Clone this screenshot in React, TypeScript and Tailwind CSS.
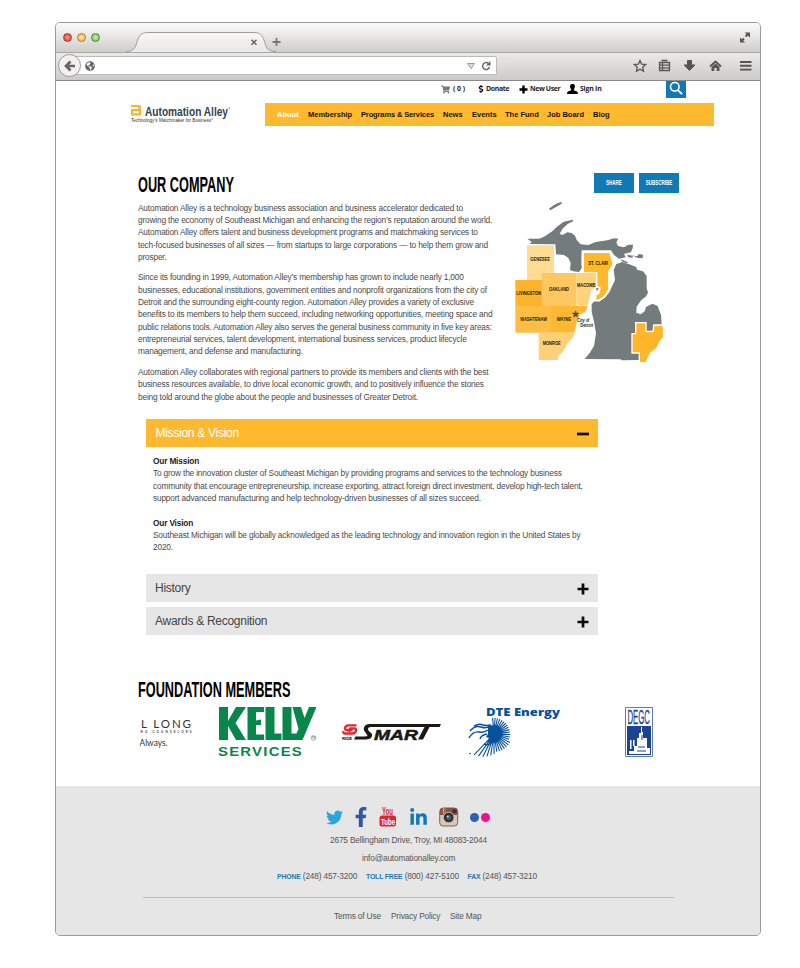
import React from "react";
import { FaTwitter, FaFacebookF, FaLinkedinIn, FaShoppingCart, FaDollarSign, FaGlobeAmericas } from "react-icons/fa";

const company = [
  [
    "Automation Alley is a technology business association and business accelerator dedicated to",
    "growing the economy of Southeast Michigan and enhancing the region’s reputation around the world.",
    "Automation Alley offers talent and business development programs and matchmaking services to",
    "tech-focused businesses of all sizes — from startups to large corporations — to help them grow and",
    "prosper.",
  ],
  [
    "Since its founding in 1999, Automation Alley’s membership has grown to include nearly 1,000",
    "businesses, educational institutions, government entities and nonprofit organizations from the city of",
    "Detroit and the surrounding eight-county region. Automation Alley provides a variety of exclusive",
    "benefits to its members to help them succeed, including networking opportunities, meeting space and",
    "public relations tools. Automation Alley also serves the general business community in five key areas:",
    "entrepreneurial services, talent development, international business services, product lifecycle",
    "management, and defense and manufacturing.",
  ],
  [
    "Automation Alley collaborates with regional partners to provide its members and clients with the best",
    "business resources available, to drive local economic growth, and to positively influence the stories",
    "being told around the globe about the people and businesses of Greater Detroit.",
  ],
];

function Lines({ lines }: { lines: string[] }) {
  return (
    <p>
      {lines.map((l) => (
        <span key={l} className="block whitespace-nowrap">{l}</span>
      ))}
    </p>
  );
}

function TitleBar() {
  return (
    <div className="flex h-[29px] shrink-0 bg-linear-to-b from-[#fafafa] via-[#e6e5e3] to-[#cfcdca]">
      <div className="flex w-[70px] items-center gap-[5px] pl-[7px]">
        <i className="size-[9px] rounded-full border border-[#9b3a38] bg-radial from-[#ff8d88] to-[#d9302f]" />
        <i className="size-[9px] rounded-full border border-[#ae7b33] bg-radial from-[#ffe9a4] to-[#f0ab3c]" />
        <i className="size-[9px] rounded-full border border-[#50803f] bg-radial from-[#c8f2a8] to-[#6abd51]" />
      </div>
      <svg className="h-[29px] w-[634px]" viewBox="126 23 634 29">
        <defs>
          <linearGradient id="tab" x1="0" y1="0" x2="0" y2="1">
            <stop offset="0" stopColor="#f7f7f6" />
            <stop offset="1" stopColor="#e9e8e6" />
          </linearGradient>
        </defs>
        <path d="M126 52C136 52 136 44 138 39C140 34 143 32.5 149 32.5H254C260 32.5 262 35 264 40C266 46 266 52 276 52Z" fill="url(#tab)" />
        <path d="M126 51.5C136 51.5 136 44 138 39C140 34 143 32.5 149 32.5H254C260 32.5 262 35 264 40C266 46 266 51.5 276 51.5" fill="none" stroke="#a19f9d" />
        <path d="M251.5 39.8l5 5m0-5l-5 5" stroke="#666" strokeWidth="1.5" />
        <path d="M276.500 38v8M272.500 42h8" stroke="#777" strokeWidth="1.8" />
        <g fill="#555" stroke="#555">
          <path d="M741 41.500l3-3M745.500 36.500l3-3" strokeWidth="1.800" />
          <path d="M740 37.500v5h5zM744.700 32.500h5.300v5.300z" stroke="none" />
        </g>
      </svg>
    </div>
  );
}

function ToolBar() {
  return (
    <div className="flex h-[29px] shrink-0 items-center border-t border-b border-t-[#aaa8a5] border-b-[#8b8a88] bg-linear-to-b from-[#eceae8] to-[#cdcbc8] pb-[2px]">
      <div className="z-10 ml-[2px] flex size-[23px] items-center justify-center rounded-full border border-[#999] bg-[#f2f1f0]">
        <svg className="h-[12px] w-[12px]" viewBox="0 0 12 12">
          <path d="M11 6H3M6.500 1.500L2 6l4.500 4.500" fill="none" stroke="#666" strokeWidth="2.700" />
        </svg>
      </div>
      <div className="-ml-[6px] flex h-[19px] w-[422px] items-center rounded-r-[2px] border border-[#bdbbb8] bg-white pl-[9px] text-[#666]">
        <FaGlobeAmericas className="size-[10px]" />
        <svg className="mr-[4px] ml-auto h-[12px] w-[26px]" viewBox="0 0 26 12">
          <path d="M1.500 3.500h7L5 8.500z" fill="#ddd" stroke="#999" />
          <path d="M22.500 3.500A3.500 3.500 0 1 0 23.500 7" fill="none" stroke="#666" strokeWidth="1.400" />
          <path d="M24.500 1v4.500H20z" fill="#666" />
        </svg>
      </div>
      <svg className="ml-[135.500px] h-[14px] w-[120px]" viewBox="632 59 120 14" fill="none" stroke="#555">
        <path d="M639 60.500l1.700 3.700 4 .4-3 2.700.9 4-3.600-2.100-3.600 2.100.9-4-3-2.700 4-.4z" strokeWidth="1.300" />
        <path d="M658.500 62.500h10v8h-10zM660.500 60.500h6M661.500 62.500v8M658.500 65.200h10M658.500 67.800h10" strokeWidth="1.300" />
        <path d="M686.500 60.500h4v4.500h3.500l-5.500 5.500-5.500-5.500h3.500z" fill="#555" strokeLinejoin="round" />
        <path d="M709 66.500l5.500-5 5.500 5" strokeWidth="1.800" />
        <path d="M710.500 67l4-3.500 4 3.500v4h-2.800v-3h-2.400v3h-2.800z" fill="#555" stroke="none" />
        <path d="M739 62h11.500M739 65.800h11.500M739 69.600h11.500" strokeWidth="1.900" />
      </svg>
    </div>
  );
}

function Header() {
  return (
    <header className="h-[46px] shrink-0">
      <div className="flex h-[22px] text-[6.900px] font-bold text-[#222]">
        <div className="ml-[385px] flex h-[17px] w-[189px] items-center font-['Open_Sans','Liberation_Sans',sans-serif] whitespace-nowrap">
          <span className="flex w-[36px] items-center gap-[3px]"><FaShoppingCart className="size-[9px] text-[#777]" />( 0 )</span>
          <span className="flex w-[42px] items-center gap-[1px]"><FaDollarSign className="size-[8px] text-black" /><span className="tracking-[-0.32px]">Donate</span></span>
          <span className="flex w-[48px] items-center gap-[2px]">
            <svg className="size-[9px] shrink-0" viewBox="0 0 9 9"><path d="M4.500.5v8M.5 4.500h8" stroke="#000" strokeWidth="2.400" /></svg><span className="tracking-[-0.38px]">New User</span>
          </span>
          <span className="flex items-center gap-[2px]">
            <svg className="h-[10px] w-[11px]" viewBox="0 0 11 10"><path d="M5.500 0C8 0 8.200 2 7.700 3.800 7.300 5.200 6.800 5.500 6.800 6.300L10 7.500q1 .5 1 2.500H0Q0 8 1 7.500L4.200 6.300C4.200 5.500 3.700 5.200 3.300 3.800 2.800 2 3 0 5.500 0z" /></svg>
            <span className="tracking-[-0.2px]">Sign In</span>
          </span>
        </div>
        <div className="ml-[36px] flex h-[17px] w-[20px] items-start justify-center bg-[#0f7ab6]">
          <svg className="h-[15px] w-[14px]" viewBox="0 0 14 15"><circle cx="5.800" cy="5.800" r="4.300" fill="none" stroke="#fff" strokeWidth="1.600" /><path d="M9 9.200l4 4" stroke="#fff" strokeWidth="1.900" /></svg>
        </div>
      </div>
      <div className="flex h-[23px]">
        <svg className="ml-[74px] h-[23px] w-[106px]" viewBox="130 103 106 23">
          <path d="M131 105h8q2 0 2 2v8.500h-10v-6.500h7.500v-2H131z" fill="#fbb12a" />
          <path d="M133 111.300h6v2h-6z" fill="#fff" />
          <text x="145" y="115.500" fontFamily="Liberation Sans" fontWeight="bold" fontSize="12" textLength="83" lengthAdjust="spacingAndGlyphs" fill="#33444a">Automation Alley</text>
          <circle cx="229.300" cy="108" r=".8" fill="#66757a" />
          <text x="131" y="122" fontFamily="Liberation Sans" fontSize="5.500" textLength="82" lengthAdjust="spacingAndGlyphs" fill="#333">Technology’s Matchmaker for Business°</text>
        </svg>
        <nav className="ml-[29px] flex h-[23px] w-[449px] items-center bg-[#ffb92f] text-[7.500px] font-bold whitespace-nowrap text-[#1a1200]">
          <a className="ml-[12px] w-[31px] text-white">About</a>
          <a className="w-[53px]">Membership</a>
          <a className="w-[82px] tracking-[-0.13px]">Programs &amp; Services</a>
          <a className="w-[29px]">News</a>
          <a className="w-[33px]">Events</a>
          <a className="w-[42px]">The Fund</a>
          <a className="w-[46px]">Job Board</a>
          <a>Blog</a>
        </nav>
      </div>
    </header>
  );
}

const counties: [number, number, number, string][] = [
  [94, 303, 59, "GENESEE"],
  [268, 316, 59, "ST. CLAIR"],
  [150, 393, 60, "OAKLAND"],
  [234, 380, 55, "MACOMB"],
  [52, 405, 74, "LIVINGSTON"],
  [64, 482, 80, "WASHTENAW"],
  [173, 482, 44, "WAYNE"],
  [131, 555, 54, "MONROE"],
  [235, 485, 36, "City of"],
  [244, 502, 38, "Detroit"],
];

function CountyMap() {
  return (
    <svg className="mt-[7px] h-[162px] w-[152px]" viewBox="45 120 456 486">
      <g fill="#737b7c">
        <path d="M150 146L164 136 178 128 190 126 187 132 166 144 154 151z" />
        <path d="M85 236L120 236 135 230 160 214 172 202 194 185 222 179 222 184 206 192 192 205 182 221 190 225 205 217 218 219 228 227 233 240 245 253 268 255 290 246 325 241 345 235 358 236 352 247 357 258 375 262 388 254 402 254 401 265 396 276 375 282 380 292 360 296 345 285 336 271 248 271 247 300 248 325 240 336 222 334 213 330 215 308 208 294 195 285 171 283 169 253 92 252 98 246z" />
        <path d="M400 286L414 289 420 282 432 284 431 295 416 294zM366 298L388 307 384 310 368 304zM384 284L402 287 400 293 388 292z" />
        <path d="M352 312L370 306 395 314 412 321 414 329 432 334 443 348 443 385 447 398 440 410 427 420 413 440 412 458 425 463 437 454 441 441 460 431 476 438 486 465 488 494 440 560 420 600 368 601 365 598 257 597 272 579 285 558 291 520 285 485 278 455 278 432 288 422 310 418 330 398 348 360 344 330z" />
      </g>
      <path d="M252 276H333L344 313 330 335 331 388 318 409 300 422 288 421 290 405 299 399 302 384 292 379V340H252z" fill="#ffb92f" stroke="#fff" strokeWidth="6" />
      <path d="M84 256h81v85h-36v18H84z" fill="#ffdc94" />
      <path d="M129 339h103v99H129z" fill="#ffc760" />
      <path d="M232 339h59v42l-15 9-3 17-6 29h-35z" fill="#ffd27b" />
      <path d="M49 360h80v78H49z" fill="#fdb32a" />
      <path d="M49 438h107v80H49z" fill="#ffbd43" />
      <path d="M156 438h110l-7 17-18 10-7 19-8 34h-70z" fill="#ffb831" />
      <path d="M119 518h107l-2 12-20 22-12 24-16 13 2 11h-59z" fill="#ffd078" />
      <path d="M412 490h27v26h25l2-19h25l1 34-11 13-9 19-20 17-14 30h-15v-33h-22v-54h11z" fill="#ffb62b" stroke="#fff" strokeWidth="8" />
      <path d="M412 490h27v26h25l2-19h25l1 34-11 13-9 19-20 17-14 30h-15v-33h-22v-54h11z" fill="#ffb62b" />
      <path d="M230 452l3 7h7l-5 5 2 8-7-4-7 4 2-8-6-5h8z" fill="#46545a" stroke="#46545a" />
      <g fontFamily="Liberation Sans" fontWeight="bold" fontSize="15" fill="#221a08">
        {counties.map(([x, y, w, name]) => (
          <text key={name} x={x} y={y} textLength={w} lengthAdjust="spacingAndGlyphs">{name}</text>
        ))}
        <text x="292" y="394" fontSize="9">P</text>
      </g>
    </svg>
  );
}

function Accordion({ title, open = false }: { title: string; open?: boolean }) {
  return (
    <div className={open ? "flex h-[28px] items-center justify-between bg-[#ffb92f] pr-[9px] pl-[9.500px] text-white" : "flex h-[28px] items-center justify-between bg-[#e6e6e6] pr-[9px] pl-[9px] text-[#444]"}>
      <span className="text-[12px] leading-[28px] tracking-[-0.28px]">{title}</span>
      <svg className="mt-[2px] size-[12px]" viewBox="0 0 12 12">
        <path d={open ? "M0 6h12" : "M6 .5v11M.5 6h11"} stroke="#0a0a0a" strokeWidth="2.700" />
      </svg>
    </div>
  );
}

function Sponsors() {
  const rays = Array.from({ length: 27 }, (_, i) => {
    const deg = -95 + i * 8.8;
    const a = deg * (Math.PI / 180);
    const r = deg > 85 ? 19 + (deg - 85) / 5 : deg > 20 ? 18 : 16;
    return `M${494 + 5 * Math.cos(a)} ${734 + 5 * Math.sin(a)}L${494 + r * Math.cos(a)} ${734 + r * Math.sin(a)}`;
  }).join("");
  return (
    <div className="flex h-[60px] w-[520px]">
      <svg className="h-[60px] w-[74px]" viewBox="138 702 74 60">
        <g fontFamily="Lato" fill="#333">
          <text x="141" y="728" fontSize="11.500" textLength="50">L LONG</text>
          <text x="140.500" y="732.500" fontSize="3" fontWeight="bold" textLength="51">NO COUNSELORS</text>
          <text x="139.500" y="745.500" fontSize="8.500" textLength="28" lengthAdjust="spacingAndGlyphs">Always.</text>
        </g>
      </svg>
      <svg className="h-[60px] w-[124px]" viewBox="212 702 124 60" fill="#08874a">
        <path d="M219 707h9v14l8-14h10l-10.500 16L246 740h-10l-8-14v14h-9zM247.500 707h16.500v5h-8v8.500l5-1v5.500h-5v9.500h8v5.500h-16.500zM265.500 707h9v26.500h7v6.500h-16zM282.500 707h9v26.500h6v6.500h-15zM292.500 707h8.500l3.500 11 4.500-11h7.500l-14 33h-9l5-11z" />
        <text x="218" y="756" fontFamily="Liberation Sans" fontWeight="bold" fontSize="12" textLength="85" lengthAdjust="spacingAndGlyphs" letterSpacing="1">SERVICES</text>
        <circle cx="313.500" cy="738" r="2.300" fill="none" stroke="#08874a" strokeWidth=".5" />
        <text x="312.300" y="739.400" fontFamily="Liberation Sans" fontSize="4">R</text>
      </svg>
      <svg className="h-[60px] w-[124px]" viewBox="336 702 124 60">
        <path d="M356.500 725.300h-8q-3 0-3.500 2.700-.3 2 2 2h5.500M350.500 728.500h4q2 0 1.500 2.300-.6 2.700-3.500 2.700h-8q-1.500 0-1-2.500M350.500 727.500l-1.500 4.500" fill="none" stroke="#de292f" strokeWidth="2.300" />
        <text x="342" y="739.500" fontFamily="Liberation Sans" fontSize="3.500" fontWeight="bold" textLength="10" lengthAdjust="spacingAndGlyphs">RIDE</text>
        <path d="M441 724l-1.500 3H371q-3 0-3 2t2 3l2 2q1 5-6 5.500h-12l1.500-3h9q3 0 3-1l-2-3q-3-3-1-6 1-2.500 5-2.500z" fill="#1c1712" />
        <text x="374" y="739.500" fontFamily="Liberation Sans" fontSize="14.500" fontWeight="bold" fontStyle="italic" textLength="44" lengthAdjust="spacingAndGlyphs" fill="#1c1712" stroke="#1c1712" strokeWidth=".5">MAR</text>
        <path d="M425 726h5l-7 13.500h-5z" fill="#1c1712" />
      </svg>
      <svg className="h-[60px] w-[140px]" viewBox="460 702 140 60">
        <text x="486" y="716" fontFamily="Open Sans" fontWeight="800" fontSize="11" textLength="74" lengthAdjust="spacingAndGlyphs" fill="#07519c">DTE Energy</text>
        <path d={rays} stroke="#07519c" strokeWidth="1.100" />
        <path d="M488 727q7-4 12 0 4 5 1 11-3 5-9 5l-5-1 2-4-3-1 2-3z" fill="#07519c" />
        <path d="M470 731q5-6 11-4 5 2 9-1M469 738q4-7 10-6 5 1 9-2M474 726q5-3 9-1 4 1 8 0M480 739q1-4 7-5M484 744q5 2 8-2" fill="none" stroke="#07519c" strokeWidth="1.400" />
        <circle cx="470" cy="753.500" r=".8" fill="#07519c" />
      </svg>
      <svg className="h-[60px] w-[58px]" viewBox="600 702 58 60">
        <path d="M625.500 707.500h27v49h-27z" fill="#fff" stroke="#5e7bb5" />
        <path d="M627 726h24v29h-24z" fill="#1c4495" />
        <text x="627.500" y="724" fontFamily="Liberation Sans" fontSize="20" textLength="22.500" lengthAdjust="spacingAndGlyphs" fill="#1c4495" stroke="#1c4495" strokeWidth=".3">DEGC</text>
        <path d="M641 727v6h-2v5h-2v8h-3v5h-5v3h21v-6h-3V738h-4v-6h-1v-5zM630 740h1.500v9H630zM633 740h1.500v6H633z" fill="#fff" />
        <path d="M638 747h7M642 735v5M637 751h9" stroke="#1c4495" />
      </svg>
    </div>
  );
}

function Footer() {
  return (
    <footer className="flex grow flex-col rounded-b-[4px] bg-[#e6e6e6] text-[8.300px] tracking-[-0.17px] text-[#555]">
      <div className="flex h-[47px] items-center pt-[15px] pl-[270px]">
        <FaTwitter className="h-[17px] w-[17px] text-[#2ba5de]" />
        <FaFacebookF className="ml-[10px] h-[20px] w-[16px] text-[#3157a4]" />
        <svg className="ml-[10px] h-[20px] w-[18px] overflow-visible" viewBox="0 0 18 20">
          <rect x=".5" y="8.500" width="16.500" height="11" rx="2.500" fill="#d9282c" />
          <g fontFamily="Liberation Sans" fontWeight="bold" letterSpacing="0">
            <text x="3" y="7.500" fontSize="10" textLength="11" lengthAdjust="spacingAndGlyphs" fill="#d9282c">You</text>
            <text x="2" y="17.500" fontSize="9.500" textLength="14" lengthAdjust="spacingAndGlyphs" fill="#fff">Tube</text>
          </g>
        </svg>
        <FaLinkedinIn className="ml-[12px] h-[19px] w-[19px] text-[#0f78b5]" />
        <svg className="ml-[11px] h-[20px] w-[20px]" viewBox="0 0 20 20">
          <rect x=".7" y="1" width="18" height="18" rx="3.500" fill="#d8c7b3" stroke="#7b6554" />
          <path d="M1 8V4q0-3 3-3h11.500q3 0 3 3v4z" fill="#875340" />
          <path d="M3 1.500v5" stroke="#d84136" strokeWidth="1.200" /><path d="M4.700 1v6" stroke="#e7bd38" strokeWidth="1.200" /><path d="M6.300 1v6" stroke="#4c9b61" strokeWidth="1.200" />
          <rect x="13.500" y="2.500" width="4" height="3.500" rx="1" fill="#333" />
          <circle cx="9.700" cy="10.500" r="5.300" fill="#302f31" stroke="#c5bbb0" />
          <circle cx="9.700" cy="10.500" r="2.500" fill="#485b70" /><circle cx="8.800" cy="9.500" r="1" fill="#c4d0dc" />
        </svg>
        <i className="ml-[11px] size-[9px] rounded-full bg-[#2a61b1]" />
        <i className="ml-[2px] size-[9px] rounded-full bg-[#f5108b]" />
      </div>
      <div className="flex flex-col pl-[221px] whitespace-nowrap">
        <p className="h-[17.500px] pl-[53px] leading-[14px]">2675 Bellingham Drive, Troy, MI 48083-2044</p>
        <p className="h-[18.500px] pl-[85px] leading-[14px]">info@automationalley.com</p>
        <p className="flex h-[28px] leading-[14px]">
          <span className="w-[89px]"><b className="text-[6.900px] font-bold text-[#237ab2]">PHONE</b> (248) 457-3200</span>
          <span className="w-[101.500px]"><b className="text-[6.900px] font-bold text-[#237ab2]">TOLL FREE</b> (800) 427-5100</span>
          <span><b className="text-[6.900px] font-bold text-[#237ab2]">FAX</b> (248) 457-3210</span>
        </p>
      </div>
      <div className="mr-[86px] ml-[87px] border-t border-[#b9bdc6]" />
      <div className="flex pt-[11px] pl-[278px] leading-[14px] whitespace-nowrap">
        <a className="w-[57px]">Terms of Use</a>
        <a className="w-[59px]">Privacy Policy</a>
        <a>Site Map</a>
      </div>
    </footer>
  );
}

export default function App() {
  return (
    <div className="h-[968px] w-[800px] overflow-hidden bg-white pt-[22px] pl-[55px] font-['Liberation_Sans',sans-serif]">
      <div className="flex h-[914px] w-[706px] flex-col overflow-hidden rounded-[5px] border border-[#9b9b9b] bg-white">
        <TitleBar />
        <ToolBar />
        <Header />
        <main className="flex h-[659px] shrink-0 flex-col pl-[82px]">
          <div className="flex h-[292px]">
            <div className="w-[376px] pt-[45px]">
              <h1 className="h-[29.500px] origin-left scale-x-[0.592] text-[21.500px] leading-[26px] font-bold whitespace-nowrap text-black">OUR COMPANY</h1>
              <div className="flex flex-col gap-[8.100px] text-[8.300px] leading-[12.350px] tracking-[-0.17px] text-[#4a4a4a]">
                {company.map((p) => <Lines key={p[0]} lines={p} />)}
              </div>
            </div>
            <div className="flex flex-col pt-[46px]">
              <div className="flex gap-[5px] pl-[80px] text-center text-[7.500px] leading-[20px] font-bold text-white">
                <span className="h-[20px] w-[40px] bg-[#0f7ab6]"><span className="block scale-x-[0.6]">SHARE</span></span>
                <span className="h-[20px] w-[40px] bg-[#0f7ab6]"><span className="-mx-[5px] block scale-x-[0.6]">SUBSCRIBE</span></span>
              </div>
              <CountyMap />
            </div>
          </div>
          <section className="ml-[8px] flex h-[256px] w-[452px] flex-col">
            <Accordion title="Mission & Vision" open />
            <div className="flex h-[127px] flex-col gap-[12.350px] pt-[8px] pl-[7px] text-[8.300px] leading-[12.350px] tracking-[-0.17px] text-[#4a4a4a]">
              <div>
                <b className="block text-[#222]">Our Mission</b>
                <Lines lines={[
                  "To grow the innovation cluster of Southeast Michigan by providing programs and services to the technology business",
                  "community that encourage entrepreneurship, increase exporting, attract foreign direct investment, develop high-tech talent,",
                  "support advanced manufacturing and help technology-driven businesses of all sizes succeed.",
                ]} />
              </div>
              <div>
                <b className="block text-[#222]">Our Vision</b>
                <Lines lines={[
                  "Southeast Michigan will be globally acknowledged as the leading technology and innovation region in the United States by",
                  "2020.",
                ]} />
              </div>
            </div>
            <div className="flex flex-col gap-[5px]">
              <Accordion title="History" />
              <Accordion title="Awards & Recognition" />
            </div>
          </section>
          <h2 className="h-[27px] origin-left scale-x-[0.592] text-[21.500px] leading-[30px] font-bold whitespace-nowrap text-black">FOUNDATION MEMBERS</h2>
          <Sponsors />
        </main>
        <Footer />
      </div>
    </div>
  );
}
